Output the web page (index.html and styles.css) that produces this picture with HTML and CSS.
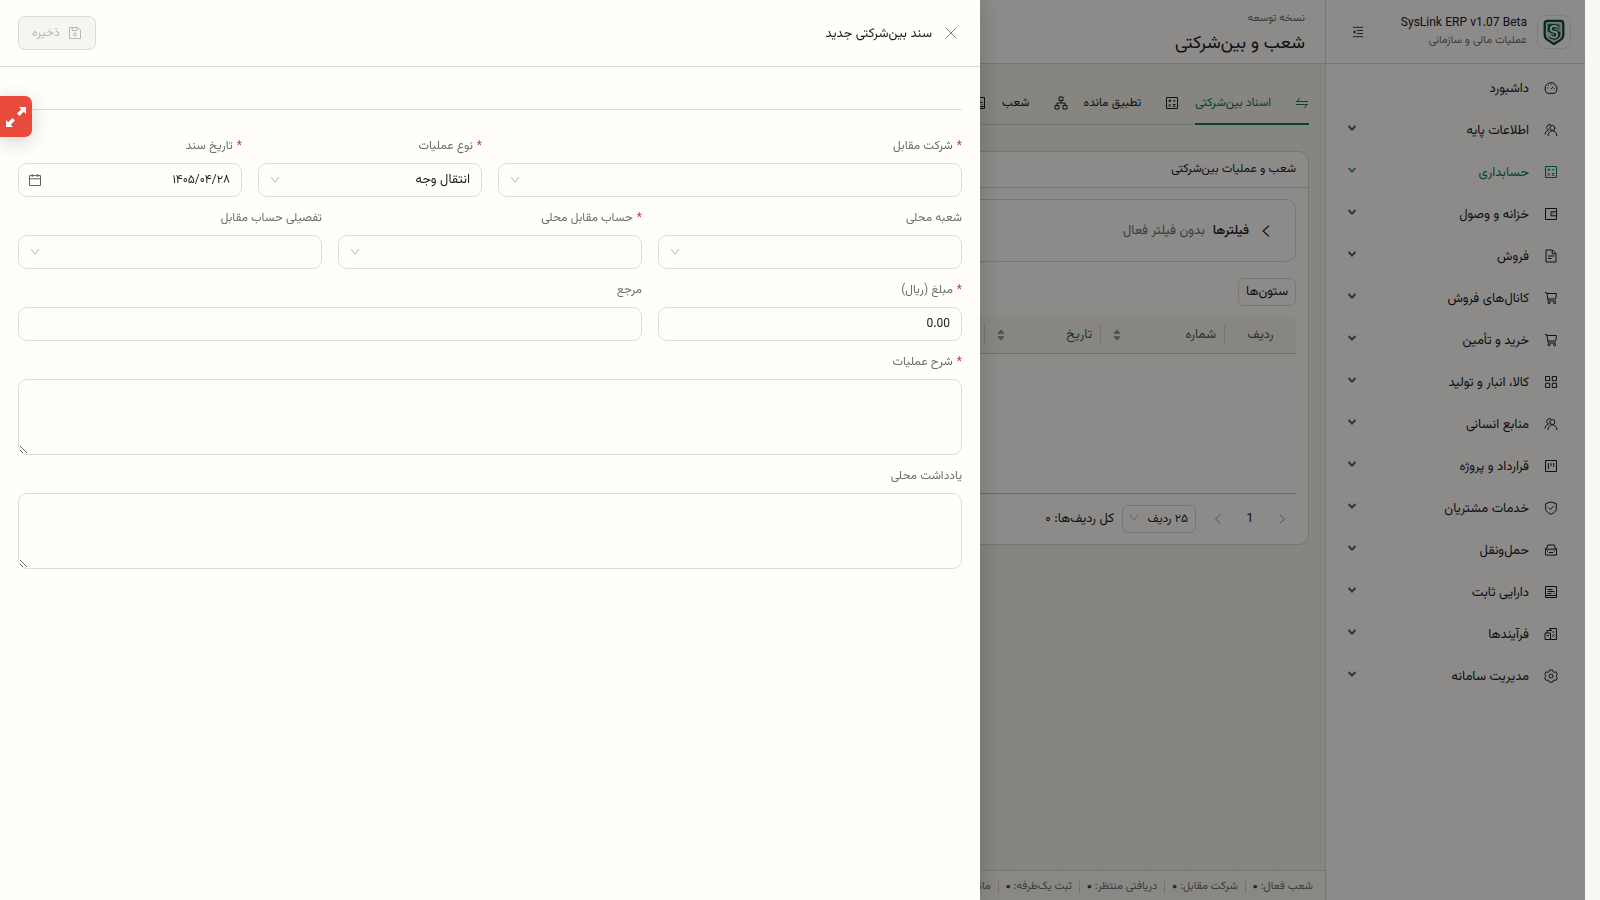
FILE: index.html
```html
<!DOCTYPE html>
<html lang="fa" dir="rtl">
<head>
  <meta charset="UTF-8" />
  <meta name="viewport" content="width=device-width, initial-scale=1" />
  <title>SysLink ERP</title>
  <link rel="stylesheet" href="styles.css">
</head>
<body>
  <svg class="sprite" aria-hidden="true">
    <symbol id="i-dashboard" viewBox="0 0 14 14"><path d="M3.2 12.3a6 6 0 1 1 7.6 0zM7 8.2l2.3-2.4M7 2.8v1M3.2 7h1M9.9 7.8h1M4.3 4.3l.6.6"/></symbol>
    <symbol id="i-team" viewBox="0 0 14 14"><circle cx="8.4" cy="5" r="2.5"/><path d="M4 13c.2-3.200 1.900-5.200 4.400-5.200s4.300 2 4.500 5.200M5 7A2.700 2.700 0 1 1 7.200 2.300M1 11.600c.1-2.200 1.200-4 3.600-4.700"/></symbol>
    <symbol id="i-calc" viewBox="0 0 14 14"><path d="M1.500 1.500h11v11h-11zM3.500 4.800h2.600M4.800 3.500v2.600M8 4.800h2.500M8 8.500h2.500M8 10.300h2.500M3.600 8.300l2.200 2.200M5.800 8.300l-2.200 2.200"/></symbol>
    <symbol id="i-wallet" viewBox="0 0 14 14"><path d="M1.500 1.500h11v11h-11zM12.500 4.800H7v4h5.500M8.700 6.800h1"/></symbol>
    <symbol id="i-file" viewBox="0 0 14 14"><path d="M2 1h6.500L12 4.500V13H2zM8.200 1v3.800H12M4 7h6M4 9.500h3.500"/></symbol>
    <symbol id="i-cart" viewBox="0 0 14 14"><path d="M1 1.500h1.800l1.400 8.500h7.600M3 2.500h9.500l-.8 5.500H3.900"/><circle cx="5" cy="11.800" r="1"/><circle cx="10.600" cy="11.800" r="1"/></symbol>
    <symbol id="i-grid" viewBox="0 0 14 14"><path d="M1.500 1.500h4.200v4.200H1.500zM8.300 1.500h4.200v4.200H8.300zM1.500 8.300h4.200v4.200H1.500zM8.300 8.300h4.200v4.200H8.300z"/></symbol>
    <symbol id="i-project" viewBox="0 0 14 14"><path d="M1.500 1.500h11v11h-11zM4.300 4v6M7 4v3M9.700 4v4"/></symbol>
    <symbol id="i-shield" viewBox="0 0 14 14"><path d="M7 .9l5.300 1.800v5.500c0 2-2.200 3.700-5.300 5-3.100-1.300-5.300-3-5.300-5V2.700zM4.600 6.700l1.900 1.900 3-3.400"/></symbol>
    <symbol id="i-car" viewBox="0 0 14 14"><path d="M1.500 6.200h11v5.900h-11zM2.600 6.200l1-4.200h6.800l1 4.200M.8 5.400l1.200.8M13.200 5.400l-1.200.8M4.800 9.500h4.400M3 8h1M10 8h1"/></symbol>
    <symbol id="i-assets" viewBox="0 0 14 14"><path d="M1.500 1.500h11v11h-11zM3.500 4.500h5M3.500 6.500h7M3.500 8.500h4M1.500 10.500h11M9.500 8.500h1"/></symbol>
    <symbol id="i-process" viewBox="0 0 14 14"><path d="M1 6h5.500v6.500H1zM3 6V3.500h5M6.500 3V1.500h6v11h-6M2.800 8.500h2M8.500 5h2M8.500 7.500l2 2M10.500 7.500l-2 2M5 1.800h2"/></symbol>
    <symbol id="i-setting" viewBox="0 0 14 14"><path d="M5.400 1h3.200l.4 1.700 1.200.7 1.700-.6 1.500 2.700L12.100 6.700v1l1.300 1.100-1.500 2.700-1.700-.5-1.200.7-.4 1.500H5.400L5 11.700 3.800 11l-1.700.5L.6 8.800l1.300-1.100v-1L.6 5.500l1.500-2.700 1.700.6L5 2.700z"/><circle cx="7" cy="7.100" r="2"/></symbol>
    <symbol id="i-chevron" viewBox="0 0 10 10"><path d="M1.500 3l3.500 3.500L8.500 3"/></symbol>
    <symbol id="i-down" viewBox="0 0 12 12"><path d="M2 3l4 5.500L10 3"/></symbol>
    <symbol id="i-left" viewBox="0 0 12 12"><path d="M8.500 1.500L3.500 6l5 4.500"/></symbol>
    <symbol id="i-right" viewBox="0 0 12 12"><path d="M3.500 1.500l5 4.500-5 4.500"/></symbol>
    <symbol id="i-fold" viewBox="0 0 14 14"><path d="M1 1.500h12M5.500 5.200H13M5.500 8.800H13M1 12.500h12"/><path class="solid" d="M1 7l2.800-2.200v4.400z"/></symbol>
    <symbol id="i-swap" viewBox="0 0 14 14"><path d="M13 5.500H1.500L5 2M1 8.500h11.500L9 12"/></symbol>
    <symbol id="i-tree" viewBox="0 0 14 14"><path d="M5 1h4v3.500H5zM1 9.500h4V13H1zM9 9.500h4V13H9zM7 4.500V7M3 9.500V7h8v2.500"/></symbol>
    <symbol id="i-save" viewBox="0 0 14 14"><path d="M1.500 1.500h8.300l2.700 2.700v8.300h-11zM4.300 1.500v3h4.800v-3"/><circle cx="7" cy="8.600" r="1.500"/></symbol>
    <symbol id="i-calendar" viewBox="0 0 14 14"><path d="M1.500 2.600h11v9.900h-11zM1.500 5.800h11M4.300 1v3M9.700 1v3"/></symbol>
    <symbol id="i-close" viewBox="0 0 14 14"><path d="M1.500 1.500l11 11M12.500 1.500l-11 11"/></symbol>
    <symbol id="i-sorter" viewBox="0 0 8 12"><path class="solid" d="M4 .5L7.800 4.800H.2zM4 11.500L7.800 7.200H.2z"/></symbol>
    <symbol id="i-expand" viewBox="0 0 22 22"><path class="solid" d="M14 1h7v7l-2.300-2.300-4.200 4.200-2.400-2.400 4.200-4.200zM8 21H1v-7l2.300 2.300 4.200-4.200 2.400 2.400-4.200 4.200z"/></symbol>
  </svg>

  <div class="app">
    <aside class="sidebar">
      <div class="brand">
        <span class="brand-logo">
          <svg viewBox="0 0 24 28">
            <path fill="#e8e6df" stroke="#064b3d" stroke-width="2.500" d="M5 2h14q3 0 3 3v12q0 3.500-3 5.500l-7 4.500-7-4.500q-3-2-3-5.500V5q0-3 3-3z"/>
            <path fill="#087a62" d="M5 5h7v9H5z"/>
            <path fill="#8fa59d" d="M12 5h7v9h-7z"/>
            <path fill="#c8cec8" d="M5 14h7v9.500l-5-3.300q-2-1.300-2-3.200z"/>
            <path fill="#32453f" d="M12 14h7v3q0 2-2 3.200l-5 3.300z"/>
            <path fill="none" stroke="#064b3d" stroke-width="4.500" d="M16 9q-1-1.500-4-1.500-3.500 0-3.500 3t3.500 3.200 3.500 3.200-3.500 3q-3 0-4-1.500"/>
            <path fill="none" stroke="#f4f4ee" stroke-width="2" d="M16 9q-1-1.500-4-1.500-3.500 0-3.500 3t3.500 3.200 3.500 3.200-3.500 3q-3 0-4-1.500"/>
          </svg>
        </span>
        <div class="brand-text">
          <strong dir="ltr">SysLink ERP v1.07 Beta</strong>
          <small>عملیات مالی و سازمانی</small>
        </div>
        <button class="fold" aria-label="جمع کردن منو"><svg class="icon"><use href="#i-fold"/></svg></button>
      </div>
      <nav class="menu">
        <a href="#"><svg class="icon"><use href="#i-dashboard"/></svg><span>داشبورد</span></a>
        <button><svg class="icon"><use href="#i-team"/></svg><span>اطلاعات پایه</span><svg class="arrow"><use href="#i-chevron"/></svg></button>
        <button class="active"><svg class="icon"><use href="#i-calc"/></svg><span>حسابداری</span><svg class="arrow"><use href="#i-chevron"/></svg></button>
        <button><svg class="icon"><use href="#i-wallet"/></svg><span>خزانه و وصول</span><svg class="arrow"><use href="#i-chevron"/></svg></button>
        <button><svg class="icon"><use href="#i-file"/></svg><span>فروش</span><svg class="arrow"><use href="#i-chevron"/></svg></button>
        <button><svg class="icon"><use href="#i-cart"/></svg><span>کانال‌های فروش</span><svg class="arrow"><use href="#i-chevron"/></svg></button>
        <button><svg class="icon"><use href="#i-cart"/></svg><span>خرید و تأمین</span><svg class="arrow"><use href="#i-chevron"/></svg></button>
        <button><svg class="icon"><use href="#i-grid"/></svg><span>کالا، انبار و تولید</span><svg class="arrow"><use href="#i-chevron"/></svg></button>
        <button><svg class="icon"><use href="#i-team"/></svg><span>منابع انسانی</span><svg class="arrow"><use href="#i-chevron"/></svg></button>
        <button><svg class="icon"><use href="#i-project"/></svg><span>قرارداد و پروژه</span><svg class="arrow"><use href="#i-chevron"/></svg></button>
        <button><svg class="icon"><use href="#i-shield"/></svg><span>خدمات مشتریان</span><svg class="arrow"><use href="#i-chevron"/></svg></button>
        <button><svg class="icon"><use href="#i-car"/></svg><span>حمل‌ونقل</span><svg class="arrow"><use href="#i-chevron"/></svg></button>
        <button><svg class="icon"><use href="#i-assets"/></svg><span>دارایی ثابت</span><svg class="arrow"><use href="#i-chevron"/></svg></button>
        <button><svg class="icon"><use href="#i-process"/></svg><span>فرآیندها</span><svg class="arrow"><use href="#i-chevron"/></svg></button>
        <button><svg class="icon"><use href="#i-setting"/></svg><span>مدیریت سامانه</span><svg class="arrow"><use href="#i-chevron"/></svg></button>
      </nav>
    </aside>

    <div class="page">
      <header class="page-header">
        <small>نسخه توسعه</small>
        <h1>شعب و بین‌شرکتی</h1>
      </header>

      <main class="content">
        <div class="tabs">
          <button class="tab active"><svg class="icon"><use href="#i-swap"/></svg>اسناد بین‌شرکتی</button>
          <button class="tab"><svg class="icon"><use href="#i-calc"/></svg>تطبیق مانده</button>
          <button class="tab"><svg class="icon"><use href="#i-tree"/></svg>شعب</button>
          <button class="tab"><svg class="icon"><use href="#i-assets"/></svg></button>
        </div>

        <section class="card">
          <h2>شعب و عملیات بین‌شرکتی</h2>
          <div class="card-body">
            <div class="filters">
              <svg class="icon"><use href="#i-left"/></svg>
              <strong>فیلترها</strong>
              <span>بدون فیلتر فعال</span>
            </div>
            <button class="columns-btn">ستون‌ها</button>
            <table class="grid">
              <thead>
                <tr>
                  <th class="col-row">ردیف</th>
                  <th class="col-number"><div>شماره<svg><use href="#i-sorter"/></svg></div></th>
                  <th class="col-date"><div>تاریخ<svg><use href="#i-sorter"/></svg></div></th>
                  <th><div></div></th>
                </tr>
              </thead>
              <tbody>
                <tr><td colspan="4"></td></tr>
              </tbody>
            </table>
            <div class="pagination">
              <button aria-label="قبلی"><svg class="icon"><use href="#i-right"/></svg></button>
              <button class="current">1</button>
              <button aria-label="بعدی"><svg class="icon"><use href="#i-left"/></svg></button>
              <div class="select page-size">
                <select aria-label="تعداد ردیف"><option>۲۵ ردیف</option></select>
                <svg><use href="#i-down"/></svg>
              </div>
              <span>کل ردیف‌ها: ۰</span>
            </div>
          </div>
        </section>
      </main>

      <footer class="status">
        <span>شعب فعال: <b>۰</b></span>
        <span>شرکت مقابل: <b>۰</b></span>
        <span>دریافتی منتظر: <b>۰</b></span>
        <span>ثبت یک‌طرفه: <b>۰</b></span>
        <span>مانده</span>
      </footer>
    </div>
  </div>

  <div class="mask"></div>

  <section class="drawer" role="dialog" aria-labelledby="drawer-title">
    <header class="drawer-header">
      <button class="close" aria-label="بستن"><svg class="icon"><use href="#i-close"/></svg></button>
      <h2 id="drawer-title">سند بین‌شرکتی جدید</h2>
      <button class="save" disabled><svg class="icon"><use href="#i-save"/></svg>ذخیره</button>
    </header>
    <form class="drawer-body">
      <hr>
      <div class="form-grid">
        <div class="field span-12">
          <label class="required" for="company">شرکت مقابل</label>
          <div class="select"><select id="company"><option></option></select><svg><use href="#i-down"/></svg></div>
        </div>
        <div class="field span-6">
          <label class="required" for="kind">نوع عملیات</label>
          <div class="select"><select id="kind"><option>انتقال وجه</option></select><svg><use href="#i-down"/></svg></div>
        </div>
        <div class="field span-6">
          <label class="required" for="date">تاریخ سند</label>
          <div class="select date"><input id="date" value="۱۴۰۵/۰۴/۲۸"><svg><use href="#i-calendar"/></svg></div>
        </div>
        <div class="field span-8">
          <label for="branch">شعبه محلی</label>
          <div class="select"><select id="branch"><option></option></select><svg><use href="#i-down"/></svg></div>
        </div>
        <div class="field span-8">
          <label class="required" for="account">حساب مقابل محلی</label>
          <div class="select"><select id="account"><option></option></select><svg><use href="#i-down"/></svg></div>
        </div>
        <div class="field span-8">
          <label for="detail">تفصیلی حساب مقابل</label>
          <div class="select"><select id="detail"><option></option></select><svg><use href="#i-down"/></svg></div>
        </div>
        <div class="field span-8">
          <label class="required" for="amount">مبلغ (ریال)</label>
          <input id="amount" value="0.00">
        </div>
        <div class="field span-16">
          <label for="ref">مرجع</label>
          <input id="ref">
        </div>
        <div class="field span-24">
          <label class="required" for="desc">شرح عملیات</label>
          <textarea id="desc"></textarea>
        </div>
        <div class="field span-24">
          <label for="note">یادداشت محلی</label>
          <textarea id="note"></textarea>
        </div>
      </div>
    </form>
  </section>

  <button class="expand" aria-label="تمام صفحه"><svg><use href="#i-expand"/></svg></button>
</body>
</html>
```
FILE: styles.css
```css
:root {
  --gutter: 15px;
  --surface: #fffefb;
  --border: #dddeda;
  --text: #17211f;
  --muted: #68716e;
  --green: #087a62;
}

* {
  box-sizing: border-box;
}

body {
  margin: 0;
  background: #f8f7f2;
  color: var(--text);
  font-family: Vazirmatn, "Noto Sans", "Noto Sans Arabic", "DejaVu Sans", sans-serif;
  font-size: 13px;
  line-height: 20px;
  overflow: hidden;
}

button, input, select, textarea {
  font: inherit;
  color: inherit;
}

button {
  background: none;
  border: none;
  padding: 0;
  cursor: pointer;
}

h1, h2 {
  margin: 0;
  font-weight: 400;
}

svg {
  fill: none;
  stroke: currentColor;
  flex: none;
}

.solid {
  fill: currentColor;
  stroke: none;
}

.sprite {
  display: none;
}

.icon {
  width: 14px;
  height: 14px;
}

.app {
  display: flex;
  min-height: 100vh;
  margin-right: var(--gutter);
}

/* sidebar */
.sidebar {
  width: 260px;
  background: var(--surface);
  border-left: 1px solid #d8d8d3;
}

.brand {
  height: 64px;
  display: flex;
  align-items: center;
  padding: 0 14px 0 20px;
  border-bottom: 1px solid #d8d8d3;
}

.brand-logo {
  width: 34px;
  height: 34px;
  border: 1px solid #e4e3de;
  border-radius: 8px;
  display: flex;
  align-items: center;
  justify-content: center;
}

.brand-logo svg {
  width: 24px;
  height: 26px;
  stroke: none;
}

.brand-text {
  flex: 1;
  margin-right: 10px;
  display: flex;
  flex-direction: column;
  align-items: flex-start;
}

.brand-text strong {
  font-size: 12px;
  line-height: 18px;
  font-weight: 400;
}

.brand-text small,
.page-header small {
  font-size: 11px;
  line-height: 18px;
  color: var(--muted);
}

.fold {
  width: 24px;
  height: 24px;
  display: flex;
  align-items: center;
  justify-content: center;
}

.fold .icon {
  width: 12px;
  height: 12px;
}

.menu {
  display: flex;
  flex-direction: column;
  gap: 2px;
  padding: 4px 0;
}

.menu a,
.menu button {
  height: 40px;
  display: flex;
  align-items: center;
  gap: 15px;
  padding: 0 27px 0 21px;
  color: inherit;
  text-decoration: none;
}

.menu span {
  padding-top: 2px;
}

.menu .active {
  color: var(--green);
}

.menu .arrow {
  width: 10px;
  height: 10px;
  margin-right: auto;
  margin-bottom: 4px;
  stroke-width: 2;
  opacity: 0.7;
}

/* page */
.page {
  flex: 1;
  min-width: 0;
  display: flex;
  flex-direction: column;
  background-color: #f4f3ea;
  background-image:
    linear-gradient(rgba(8, 80, 60, 0.03) 1px, transparent 1px),
    linear-gradient(90deg, rgba(8, 80, 60, 0.03) 1px, transparent 1px);
  background-size: 44px 44px;
}

.page-header {
  height: 64px;
  padding: 10px 20px 0;
  background: var(--surface);
  border-bottom: 1px solid #d8d8d3;
  display: flex;
  flex-direction: column;
}

.page-header h1 {
  font-size: 18px;
  line-height: 32px;
}

.content {
  flex: 1;
  padding: 16px;
}

.tabs {
  display: flex;
  gap: 16px;
  border-bottom: 1px solid #d0d0ca;
  margin-bottom: 26px;
}

.tab {
  height: 45px;
  display: flex;
  align-items: center;
  gap: 24px;
  padding-top: 2px;
  font-size: 12px;
  border-bottom: 2px solid transparent;
  margin-bottom: -1px;
}

.tab.active {
  color: var(--green);
  border-color: var(--green);
}

.card {
  background: var(--surface);
  border: 1px solid #d6d6d0;
  border-radius: 10px;
}

.card h2 {
  font-size: 12px;
  line-height: 35px;
  padding: 0 12px;
  border-bottom: 1px solid #d8d8d3;
}

.card-body {
  padding: 11px 12px 0;
}

.filters {
  height: 63px;
  display: flex;
  align-items: center;
  padding: 0 22px;
  border: 1px solid #d8d8d3;
  border-radius: 10px;
  margin-bottom: 16px;
}

.filters strong {
  font-weight: 500;
  margin: 0 10px 0 8px;
}

.filters span {
  color: var(--muted);
}

.columns-btn {
  display: block;
  height: 28px;
  padding: 0 7px;
  border: 1px solid #d8d8d3;
  border-radius: 6px;
  margin-bottom: 11px;
}

.grid {
  width: 100%;
  table-layout: fixed;
  border-collapse: separate;
  border-spacing: 0;
}

.grid th {
  height: 37px;
  background: #f6f5ee;
  border-bottom: 1px solid #d0d0ca;
  font-weight: 400;
  color: #505956;
  padding: 0;
}

.grid th:first-child {
  border-top-right-radius: 8px;
}

.grid th div {
  height: 20px;
  display: flex;
  align-items: center;
  justify-content: space-between;
  padding: 0 8px 0 12px;
  border-right: 1px solid #d8d8d2;
}

.grid th svg {
  width: 8px;
  height: 12px;
  color: #8a8f8c;
}

.col-row {
  width: 71px;
}

.col-number {
  width: 124px;
}

.col-date {
  width: 116px;
}

.grid td {
  height: 140px;
  border-bottom: 1px solid #c4c4be;
}

.pagination {
  display: flex;
  align-items: center;
  height: 50px;
  padding-right: 4px;
}

.pagination button {
  width: 20px;
  height: 28px;
  color: #999;
  display: flex;
  align-items: center;
  justify-content: center;
}

.pagination button .icon {
  width: 12px;
  height: 12px;
}

.pagination .current {
  width: 20px;
  margin: 0 12px;
  color: var(--text);
}

.pagination .page-size {
  width: 74px;
  margin: 0 12px 0 8px;
}

.status {
  height: 30px;
  display: flex;
  align-items: center;
  padding: 2px 12px 0;
  background: #f9f8f3;
  border-top: 1px solid #d6d6d0;
  font-size: 11px;
  color: var(--muted);
}

.status span + span {
  margin-right: 7px;
  padding-right: 7px;
  border-right: 1px solid #cfcfca;
  line-height: 12px;
}

.status b {
  font-weight: 600;
  color: var(--text);
}

.mask {
  position: fixed;
  inset: 0 var(--gutter) 0 0;
  background: rgba(0, 0, 0, 0.45);
}

/* drawer */
.drawer {
  position: fixed;
  top: 0;
  bottom: 0;
  left: 0;
  width: 980px;
  max-width: 100%;
  background: var(--surface);
  box-shadow: 6px 0 16px rgba(0, 0, 0, 0.08), 9px 0 28px rgba(0, 0, 0, 0.05);
}

.drawer-header {
  height: 67px;
  display: flex;
  align-items: center;
  padding: 0 18px;
  border-bottom: 1px solid var(--border);
}

.drawer-header h2 {
  flex: 1;
  font-size: 13px;
  line-height: 20px;
  padding-top: 2px;
  margin-right: 8px;
}

.close {
  width: 22px;
  height: 22px;
  color: #7e8482;
  display: flex;
  align-items: center;
  justify-content: center;
}

.save {
  display: flex;
  align-items: center;
  gap: 8px;
  height: 34px;
  padding: 0 13px;
  font-size: 12px;
  background: #f5f5f2;
  border: 1px solid #d9dad6;
  border-radius: 7px;
  color: #b5b7b4;
  cursor: default;
}

.drawer-body {
  padding: 42px 18px;
}

.drawer-body hr {
  margin: 0 0 25px;
  border: none;
  border-top: 1px solid var(--border);
}

.form-grid {
  display: grid;
  grid-template-columns: repeat(24, minmax(0, 1fr));
  gap: 10px 16px;
}

.field {
  display: flex;
  flex-direction: column;
  gap: 6px;
}

.span-6 { grid-column: span 6; }
.span-8 { grid-column: span 8; }
.span-12 { grid-column: span 12; }
.span-16 { grid-column: span 16; }
.span-24 { grid-column: span 24; }

.field label {
  font-size: 12px;
  line-height: 22px;
  color: var(--muted);
}

.required::before {
  content: "*";
  color: #b5423c;
  margin-left: 4px;
}

.field input,
.field textarea,
.select select {
  display: block;
  width: 100%;
  height: 34px;
  padding: 0 11px;
  background: var(--surface);
  border: 1px solid var(--border);
  border-radius: 9px;
  outline: none;
}

.field input {
  font-size: 12px;
}

.field textarea {
  height: 76px;
  resize: vertical;
}

.select {
  position: relative;
}

.select select {
  appearance: none;
}

.select svg {
  position: absolute;
  left: 11px;
  top: 11px;
  width: 12px;
  height: 12px;
  color: #b8bab7;
  pointer-events: none;
}

.select.date svg {
  left: 10px;
  top: 10px;
  width: 14px;
  height: 14px;
  color: #5d6562;
}

.select.page-size select {
  height: 28px;
  padding: 0 7px;
  font-size: 12px;
  border-color: #d8d8d3;
  border-radius: 6px;
}

.select.page-size svg {
  left: 6px;
  top: 7px;
}

.expand {
  position: fixed;
  left: 0;
  top: 96px;
  width: 32px;
  height: 41px;
  display: flex;
  align-items: center;
  justify-content: center;
  background: #e84b3c;
  color: #fff;
  border-radius: 0 7px 7px 0;
  box-shadow: 0 4px 20px rgba(0, 0, 0, 0.18);
}

.expand svg {
  width: 22px;
  height: 22px;
}
```
